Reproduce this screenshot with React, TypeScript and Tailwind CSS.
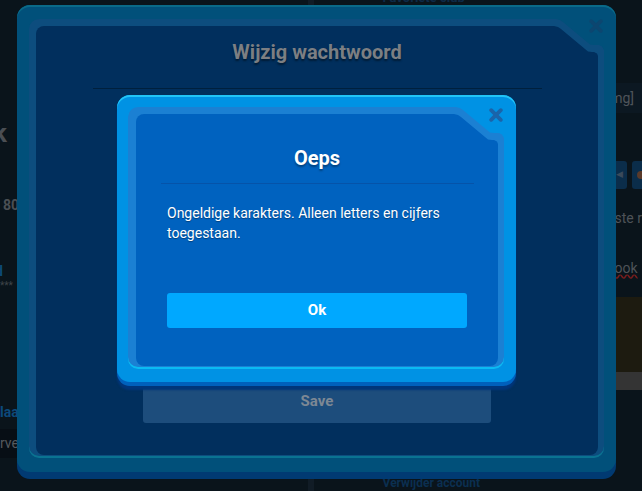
import React from "react";

function CloseX({ color, className }: { color: string; className: string }) {
  return (
    <svg width="14" height="14" viewBox="0 0 14 14" className={className}>
      <path d="M2.2 2.2 L11.8 11.8 M11.8 2.2 L2.2 11.8" stroke={color} strokeWidth="3.8" strokeLinecap="round" fill="none" />
    </svg>
  );
}

export default function App() {
  return (
    <div className="relative w-[642px] h-[491px] overflow-hidden bg-[#0a141b] [font-family:Roboto,'Liberation_Sans',sans-serif]">
      {/* page behind the dialogs (dimmed) */}
      <div className="flex h-full">
        <div className="w-[310px] flex flex-col">
          <div className="mt-[118px] -ml-[7px] text-[26px] leading-[30px] font-bold text-[#4a4e53]">k</div>
          <div className="mt-[49px] ml-[3px] text-[14px] leading-[16px] font-bold text-[#4b4f54]">80</div>
          <div className="mt-[50px] -ml-[5px] text-[14px] leading-[16px] font-bold text-[#0d4a78]">d</div>
          <div className="mt-[1px] ml-[0px] text-[10px] leading-[12px] text-[#3f4449]">***</div>
          <div className="mt-[112px] text-[14px] leading-[16px] font-bold text-[#0c4a7c]">laat</div>
          <div className="mt-[9px] h-[29px] bg-[#070e15] flex items-center text-[14px] text-[#55595e]">rve</div>
        </div>
        <div className="w-[6px] bg-[#111c26]" />
        <div className="flex-1 flex flex-col">
          <div className="-mt-[10px] ml-[69px] text-[13px] leading-[16px] font-bold text-[#0d2b48]">Favoriete club</div>
          <div className="mt-[77px] h-[30px] bg-[#0c1822] flex items-center justify-end pr-[8px] text-[14px] text-[#4f545a]">img]</div>
          <div className="mt-[48px] flex justify-end gap-[5px] -mr-[8px]">
            <div className="w-[15px] h-[28px] rounded-[3px] bg-[#0b2d4a] flex items-center justify-center text-[9px] text-[#3a4a5a]">◀</div>
            <div className="w-[18px] h-[28px] rounded-[3px] bg-[#0b2d4a] flex items-center justify-center">
              <div className="w-[8px] h-[8px] rounded-full bg-[#5a3a2a]" />
            </div>
          </div>
          <div className="mt-[20px] ml-[301px] text-[14px] leading-[18px] text-[#4e5358] whitespace-nowrap">ste r</div>
          <div className="mt-[32px] ml-[301px] text-[14px] leading-[18px] text-[#4e5358] underline decoration-wavy decoration-[#7a1c1c] whitespace-nowrap">ook</div>
          <div className="mt-[20px] h-[75px] bg-[#1d1b10]" />
          <div className="h-[18px] bg-[#343434]" />
          <div className="mt-[86px] ml-[69px] text-[12px] leading-[14px] font-bold text-[#0b2f50] whitespace-nowrap">Verwijder account</div>
        </div>
      </div>

      {/* outer dialog */}
      <div className="absolute left-[17px] top-[5px] w-[599px] h-[467px] rounded-[13px] bg-[#01507a] pt-[14px] px-[12px] pb-[14px] shadow-[inset_0_2px_0_#0a6a88,0_7px_0_#013a72]">
        <div className="h-full rounded-[10px] bg-[#0d4d7e] pl-[7px] pt-[7px] pr-[6px] pb-[3px] shadow-[inset_0_-2px_0_#0a7391] [clip-path:polygon(0_0,calc(100%_-_48px)_0,calc(100%_-_44px)_1px,calc(100%_-_41px)_3px,calc(100%_-_17px)_23px,calc(100%_-_14px)_25.5px,calc(100%_-_10px)_26px,calc(100%_-_5px)_26px,calc(100%_-_2px)_27.5px,100%_31px,100%_100%,0_100%)]">
          <div className="h-full rounded-[8px] bg-[#012f5d] flex flex-col items-center [clip-path:polygon(0_0,calc(100%_-_44px)_0,calc(100%_-_40px)_1px,calc(100%_-_37px)_3px,calc(100%_-_13px)_23px,calc(100%_-_10px)_25.5px,calc(100%_-_6px)_26px,calc(100%_-_4px)_26px,calc(100%_-_1px)_27.5px,100%_30px,100%_100%,0_100%)]">
            <div className="mt-[14px] text-[20px] leading-[24px] font-bold text-[#7c7f83] [text-shadow:0_2px_2px_rgba(0,0,0,0.45)]">
              Wijzig wachtwoord
            </div>
            <div className="mt-[24px] w-[449px] h-px bg-[#00203d]" />
            <div className="mt-[290px] w-[348px] h-[44px] rounded-[3px] bg-[#1d4d7c] flex items-center justify-center text-[15px] font-bold text-[#7d8894]">
              Save
            </div>
          </div>
        </div>
        <CloseX color="#0c4670" className="absolute right-[13px] top-[14px]" />
      </div>

      {/* inner dialog */}
      <div className="absolute left-[117px] top-[95px] w-[399px] h-[287px] rounded-[13px] bg-[#0092e4] pt-[12px] pl-[11px] pr-[12px] pb-[13px] shadow-[inset_0_2px_0_#22c4f7,0_4px_0_#0060bc,0_8px_2px_#00357a]">
        <div className="h-full rounded-[10px] bg-[#1b80d3] pl-[8px] pt-[7px] pr-[6px] pb-[3px] shadow-[inset_0_-2px_0_#0abbf3] [clip-path:polygon(0_0,calc(100%_-_48px)_0,calc(100%_-_44px)_1px,calc(100%_-_41px)_3px,calc(100%_-_17px)_23px,calc(100%_-_14px)_25.5px,calc(100%_-_10px)_26px,calc(100%_-_5px)_26px,calc(100%_-_2px)_27.5px,100%_31px,100%_100%,0_100%)]">
          <div className="h-full rounded-[8px] bg-[#0062bf] flex flex-col items-center [clip-path:polygon(0_0,calc(100%_-_44px)_0,calc(100%_-_40px)_1px,calc(100%_-_37px)_3px,calc(100%_-_13px)_23px,calc(100%_-_10px)_25.5px,calc(100%_-_6px)_26px,calc(100%_-_4px)_26px,calc(100%_-_1px)_27.5px,100%_30px,100%_100%,0_100%)]">
            <div className="mt-[32px] text-[20px] leading-[24px] font-bold text-white [text-shadow:0_2px_2px_rgba(0,0,0,0.35)]">
              Oeps
            </div>
            <div className="mt-[13px] w-[313px] h-px bg-[#0553a9]" />
            <div className="mt-[19px] w-[300px] text-[14px] leading-[20px] text-white text-left [text-shadow:0_1px_1px_rgba(0,0,0,0.35)]">
              Ongeldige karakters. Alleen letters en cijfers toegestaan.
            </div>
            <div className="mt-[50px] w-[300px] h-[35px] rounded-[3px] bg-[#00a8ff] flex items-center justify-center text-[15px] font-bold text-white">
              Ok
            </div>
          </div>
        </div>
        <CloseX color="#1a64aa" className="absolute right-[13px] top-[13px]" />
      </div>
    </div>
  );
}
